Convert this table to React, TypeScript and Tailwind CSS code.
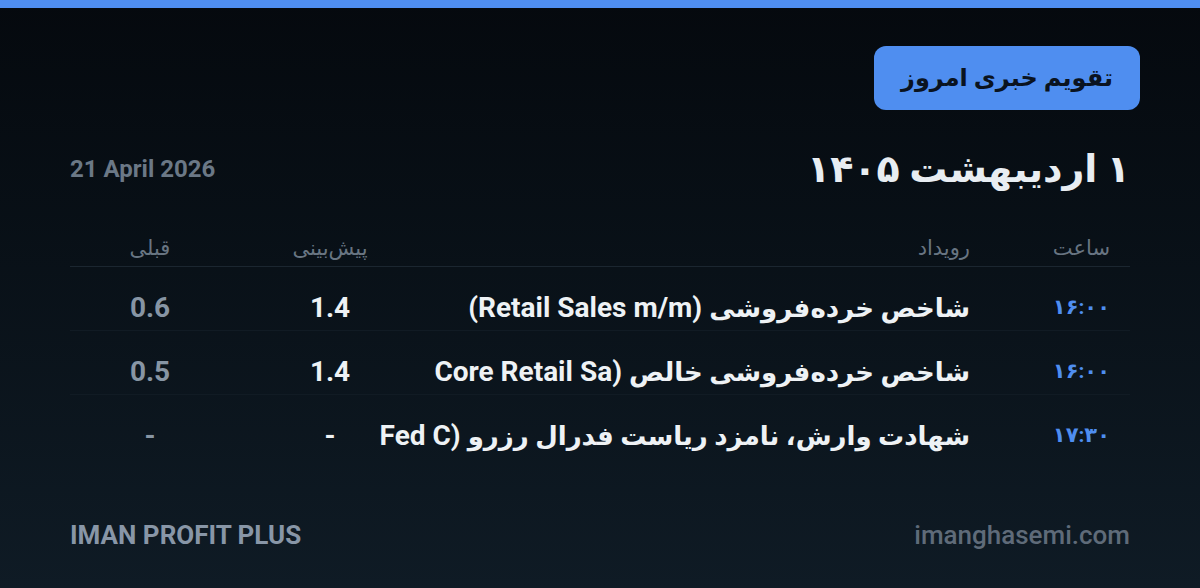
const rows = [
    { time: '۱۶:۰۰', fa: 'شاخص خرده‌فروشی', en: '(Retail Sales m/m)', forecast: '1.4', previous: '0.6' },
    { time: '۱۶:۰۰', fa: 'شاخص خرده‌فروشی خالص', en: '(Core Retail Sa', forecast: '1.4', previous: '0.5' },
    { time: '۱۷:۳۰', fa: 'شهادت وارش، نامزد ریاست فدرال رزرو', en: '(Fed C', forecast: '-', previous: '-' },
];

export default function App() {
    return (
        <div className="w-[1200px] h-[588px] flex flex-col bg-gradient-to-b from-[#05090e] to-[#0f1b25] font-['Roboto','DejaVu_Sans',sans-serif] overflow-hidden">
            <div className="h-2 bg-[#4f8ef0]" />

            <div className="flex-1 flex flex-col px-[70px] pt-[38px]">
                <div className="flex justify-end -mr-[10px]">
                    <div
                        dir="rtl"
                        className="h-16 w-[266px] rounded-xl bg-[#4f8ef0] flex items-center justify-center text-[24px] font-bold text-[#0a1320]"
                    >
                        تقویم خبری امروز
                    </div>
                </div>

                <div className="mt-[35px] h-12 flex items-center justify-between" dir="rtl">
                    <h1 className="text-[38px] font-bold text-[#e8edf2]">۱ اردیبهشت ۱۴۰۵</h1>
                    <span className="text-[24px] font-bold text-[#6b7886]" dir="ltr">
                        21 April 2026
                    </span>
                </div>

                <div className="mt-[38px]" dir="rtl">
                    <div className="h-9 flex items-center border-b border-[#1b2630] text-[21px] text-[#687582]">
                        <div className="w-[140px] shrink-0 pr-5 text-right">ساعت</div>
                        <div className="flex-1 min-w-0 pr-5 text-right">رویداد</div>
                        <div className="w-[200px] shrink-0 text-center">پیش‌بینی</div>
                        <div className="w-[160px] shrink-0 text-center">قبلی</div>
                    </div>

                    {rows.map((row, i) => (
                        <div
                            key={i}
                            className={`h-16 flex items-center pt-[18px] ${i < rows.length - 1 ? 'border-b border-[#111b24]' : ''}`}
                        >
                            <div className="w-[140px] shrink-0 pr-5 text-right text-[21px] font-bold text-[#4f8ef0]">
                                {row.time}
                            </div>
                            <div className="flex-1 min-w-0 pr-5 text-right font-bold text-[#eef2f5] whitespace-nowrap">
                                <span className="text-[26px]">{row.fa}</span>
                                <span className="text-[28px]"> {row.en}</span>
                            </div>
                            <div className="w-[200px] shrink-0 text-center text-[28px] font-bold text-[#eef2f5]">
                                {row.forecast}
                            </div>
                            <div className="w-[160px] shrink-0 text-center text-[28px] font-bold text-[#8795a4]">
                                {row.previous}
                            </div>
                        </div>
                    ))}
                </div>

                <div className="mt-auto mb-[37px] h-8 flex items-center justify-between">
                    <span className="text-[26px] font-bold text-[#8896a7]">IMAN PROFIT PLUS</span>
                    <span className="text-[26px] font-medium text-[#5f6b79]">imanghasemi.com</span>
                </div>
            </div>
        </div>
    );
}
